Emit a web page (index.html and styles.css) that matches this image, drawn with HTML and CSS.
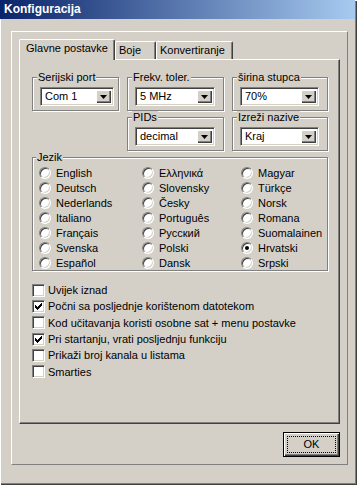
FILE: index.html
```html
<!DOCTYPE html>
<html lang="hr">
<head>
    <meta charset="UTF-8">
    <title>Konfiguracija</title>
    <link rel="stylesheet" href="styles.css">
</head>
<body>
<div class="window">
    <div class="titlebar">Konfiguracija</div>

    <div class="frame">
        <!-- Tabs -->
        <div class="tabs">
            <div class="tab active tab-main">Glavne postavke</div>
            <div class="tab tab-boje">Boje</div>
            <div class="tab tab-konv">Konvertiranje</div>
        </div>

        <div class="panel">
            <div class="groups">
                <fieldset class="group group-narrow">
                    <legend>Serijski port</legend>
                    <div class="combo"><span class="value">Com 1</span><span class="drop"><svg width="7" height="4" viewBox="0 0 7 4"><path d="M0 0h7L3.5 4z"/></svg></span></div>
                </fieldset>
                <fieldset class="group">
                    <legend>Frekv. toler.</legend>
                    <div class="combo"><span class="value">5 MHz</span><span class="drop"><svg width="7" height="4" viewBox="0 0 7 4"><path d="M0 0h7L3.5 4z"/></svg></span></div>
                </fieldset>
                <fieldset class="group">
                    <legend>širina stupca</legend>
                    <div class="combo"><span class="value">70%</span><span class="drop"><svg width="7" height="4" viewBox="0 0 7 4"><path d="M0 0h7L3.5 4z"/></svg></span></div>
                </fieldset>

                <fieldset class="group col-2">
                    <legend>PIDs</legend>
                    <div class="combo"><span class="value">decimal</span><span class="drop"><svg width="7" height="4" viewBox="0 0 7 4"><path d="M0 0h7L3.5 4z"/></svg></span></div>
                </fieldset>
                <fieldset class="group">
                    <legend>Izreži nazive</legend>
                    <div class="combo"><span class="value">Kraj</span><span class="drop"><svg width="7" height="4" viewBox="0 0 7 4"><path d="M0 0h7L3.5 4z"/></svg></span></div>
                </fieldset>

                <!-- Language -->
                <fieldset class="group group-lang">
                    <legend>Jezik</legend>
                    <div class="radios">
                        <label class="radio-item"><span class="radio"></span>English</label>
                        <label class="radio-item"><span class="radio"></span>Deutsch</label>
                        <label class="radio-item"><span class="radio"></span>Nederlands</label>
                        <label class="radio-item"><span class="radio"></span>Italiano</label>
                        <label class="radio-item"><span class="radio"></span>Français</label>
                        <label class="radio-item"><span class="radio"></span>Svenska</label>
                        <label class="radio-item"><span class="radio"></span>Español</label>

                        <label class="radio-item"><span class="radio"></span>Ελληνικά</label>
                        <label class="radio-item"><span class="radio"></span>Slovensky</label>
                        <label class="radio-item"><span class="radio"></span>Česky</label>
                        <label class="radio-item"><span class="radio"></span>Português</label>
                        <label class="radio-item"><span class="radio"></span>Русский</label>
                        <label class="radio-item"><span class="radio"></span>Polski</label>
                        <label class="radio-item"><span class="radio"></span>Dansk</label>

                        <label class="radio-item"><span class="radio"></span>Magyar</label>
                        <label class="radio-item"><span class="radio"></span>Türkçe</label>
                        <label class="radio-item"><span class="radio"></span>Norsk</label>
                        <label class="radio-item"><span class="radio"></span>Romana</label>
                        <label class="radio-item"><span class="radio"></span>Suomalainen</label>
                        <label class="radio-item"><span class="radio checked"></span>Hrvatski</label>
                        <label class="radio-item"><span class="radio"></span>Srpski</label>
                    </div>
                </fieldset>
            </div>

            <!-- Options -->
            <div class="checks">
                <label class="check-item"><span class="check"></span>Uvijek iznad</label>
                <label class="check-item"><span class="check checked"><svg width="7" height="7" viewBox="0 0 7 7"><path d="M0 2h1v1h1v1h1v-1h1v-1h1v-1h1v-1h1v3h-1v1h-1v1h-1v1h-1v1h-1v-1h-1v-1h-1z"/></svg></span>Počni sa posljednje korištenom datotekom</label>
                <label class="check-item"><span class="check"></span>Kod učitavanja koristi osobne sat + menu postavke</label>
                <label class="check-item"><span class="check checked"><svg width="7" height="7" viewBox="0 0 7 7"><path d="M0 2h1v1h1v1h1v-1h1v-1h1v-1h1v-1h1v3h-1v1h-1v1h-1v1h-1v1h-1v-1h-1v-1h-1z"/></svg></span>Pri startanju, vrati posljednju funkciju</label>
                <label class="check-item"><span class="check"></span>Prikaži broj kanala u listama</label>
                <label class="check-item"><span class="check"></span>Smarties</label>
            </div>
        </div>

        <div class="buttons">
            <button class="btn-ok"><span class="focus">OK</span></button>
        </div>
    </div>
</div>
</body>
</html>
```

FILE: styles.css
```css
body {
    margin: 0;
    background-color: #d4d0c8;
    font-family: "Liberation Sans", Arial, sans-serif;
    font-size: 11px;
    color: #000;
}
.window {
    width: 357px;
    height: 485px;
    box-sizing: border-box;
    background-color: #d4d0c8;
    box-shadow: inset 1px 1px #fff, inset -1px -1px #404040, inset -2px -2px #808080;
    overflow: hidden;
}
.titlebar {
    height: 19px;
    margin-right: 2px;
    padding-left: 4px;
    background: linear-gradient(to right, #0a246a, #a6caf0);
    color: #fff;
    font-weight: bold;
    font-size: 12px;
    line-height: 19px;
}
.frame {
    margin: 12px 9px 0 11px;
    padding: 7px;
    border: 1px solid;
    border-color: #fff #808080 #808080 #fff;
}

/* Tabs */
.tabs {
    display: flex;
    align-items: flex-end;
    height: 20px;
}
.tab {
    box-sizing: border-box;
    height: 18px;
    border: 1px solid;
    border-color: #fff #404040 transparent #fff;
    border-bottom: none;
    border-radius: 2px 2px 0 0;
    box-shadow: inset -1px 0 #808080;
    line-height: 16px;
    text-align: center;
}
.tab.active {
    height: 21px;
    margin-bottom: -1px;
    position: relative;
    z-index: 1;
    background-color: #d4d0c8;
}
.tab-main { width: 96px; }
.tab-boje { width: 41px; text-align: left; padding-left: 3px; }
.tab-konv { width: 77px; text-align: left; padding-left: 3px; }

.panel {
    height: 365px;
    box-sizing: border-box;
    border: 1px solid;
    border-color: #fff #404040 #404040 #fff;
    box-shadow: inset -1px -1px #808080;
    padding: 11px 10px 0 12px;
}

/* Group boxes */
.groups {
    display: grid;
    grid-template-columns: 87px 97px 96px;
    column-gap: 8px;
}
.group {
    margin: 0;
    min-width: 0;
    padding: 3px 8px 4px 7px;
    border: 1px solid #808080;
    box-shadow: inset 1px 1px #fff, 1px 1px #fff;
}
.group-narrow {
    padding-right: 4px;
}
.group legend {
    margin-left: -3px;
    padding: 0 1px;
    line-height: 13px;
    background-color: #d4d0c8;
}
.col-2 {
    grid-column: 2;
}
.group-lang {
    grid-column: 1 / -1;
    padding: 1px 0 0 6px;
}

/* Combo boxes */
.combo {
    display: flex;
    height: 19px;
    box-sizing: border-box;
    background-color: #fff;
    border: 1px solid;
    border-color: #808080 #fff #fff #808080;
    box-shadow: inset 1px 1px #404040, inset -1px -1px #d4d0c8;
    padding: 2px;
}
.combo .value {
    flex: 1;
    padding-left: 2px;
    line-height: 13px;
}
.combo .drop {
    width: 15px;
    height: 13px;
    box-sizing: border-box;
    margin-top: 0;
    background-color: #d4d0c8;
    box-shadow: inset 1px 1px #fff, inset -1px -1px #404040, inset -2px -2px #808080;
    display: flex;
    align-items: center;
    justify-content: center;
}

/* Radios */
.radios {
    display: grid;
    grid-template-columns: 103px 99px auto;
    grid-template-rows: repeat(7, 15px);
    grid-auto-flow: column;
}
.radio-item {
    display: flex;
    align-items: center;
    gap: 5px;
}
.radio {
    width: 12px;
    height: 12px;
    box-sizing: border-box;
    border-radius: 50%;
    background-color: #fff;
    border: 1px solid;
    border-color: #808080 #fff #fff #808080;
    box-shadow: inset 1px 1px #404040, inset -1px -1px #d4d0c8;
    display: flex;
    align-items: center;
    justify-content: center;
}
.radio.checked::after {
    content: "";
    width: 4px;
    height: 4px;
    border-radius: 50%;
    background-color: #000;
}

/* Checkboxes */
.checks {
    margin-top: 11px;
}
.check-item {
    display: flex;
    align-items: center;
    gap: 3px;
    height: 16.3px;
}
.check {
    width: 13px;
    height: 13px;
    box-sizing: border-box;
    background-color: #fff;
    border: 1px solid;
    border-color: #808080 #fff #fff #808080;
    box-shadow: inset 1px 1px #404040, inset -1px -1px #d4d0c8;
    display: flex;
    align-items: center;
    justify-content: center;
}

/* OK button */
.buttons {
    display: flex;
    justify-content: flex-end;
    margin-top: 8px;
}
.btn-ok {
    width: 57px;
    height: 25px;
    padding: 3px;
    border: 1px solid #000;
    background-color: #d4d0c8;
    box-shadow: inset 1px 1px #fff, inset -1px -1px #404040, inset -2px -2px #808080;
    font-family: "Liberation Sans", Arial, sans-serif;
    font-size: 11px;
    color: #000;
}
.btn-ok .focus {
    display: block;
    height: 100%;
    box-sizing: border-box;
    border: 1px dotted #000;
    line-height: 15px;
}
```
